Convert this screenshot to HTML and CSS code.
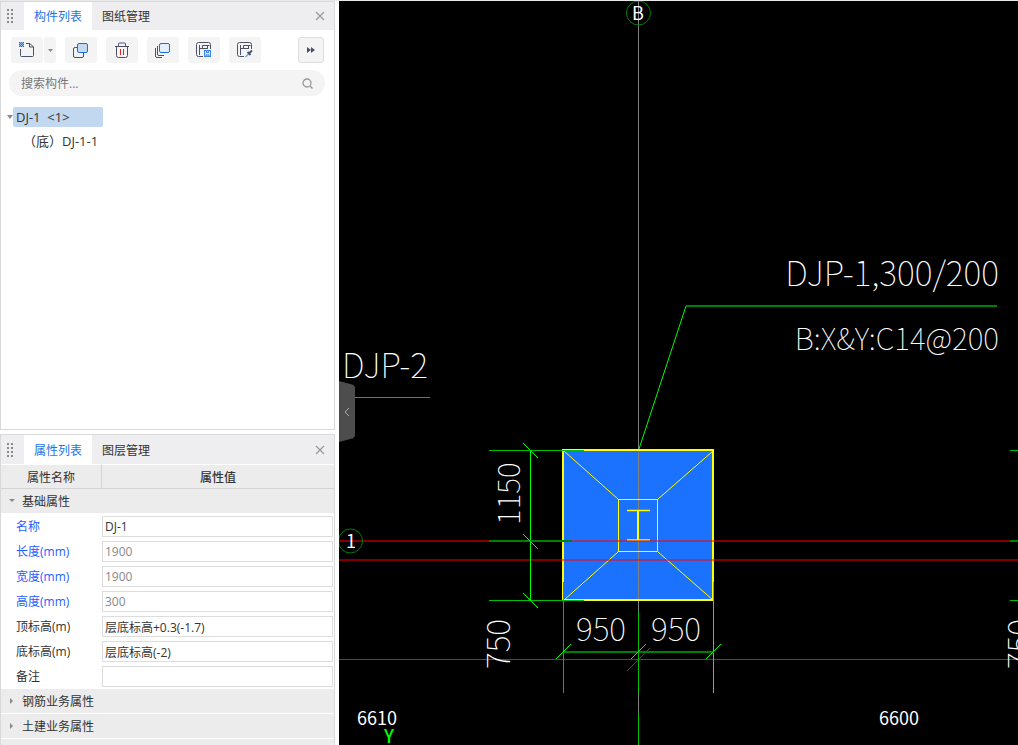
FILE: index.html
```html
<!DOCTYPE html>
<html lang="zh-CN">
<head>
  <meta charset="UTF-8" />
  <title>构件列表</title>
  <link rel="stylesheet" href="styles.css">
</head>
<body>

<div class="app">
  <aside class="sidebar">

    <section class="panel">
      <header class="panel-header">
        <svg class="grip" width="8" height="14" viewBox="0 0 8 14"><path d="M0 0h2v2H0zM0 4h2v2H0zM0 8h2v2H0zM0 12h2v2H0zM4 0h2v2H4zM4 4h2v2H4zM4 8h2v2H4zM4 12h2v2H4z" fill="#8a8a8a"/></svg>
        <button class="tab active">构件列表</button>
        <button class="tab">图纸管理</button>
        <button class="close" aria-label="关闭"><svg width="10" height="10" viewBox="0 0 10 10"><path d="M1 1l8 8M9 1L1 9" stroke="#999" stroke-width="1.2"/></svg></button>
      </header>

      <div class="toolbar">
        <div class="split">
          <button class="tool" aria-label="新建">
            <svg width="18" height="18" viewBox="0 0 18 18" fill="none">
              <path d="M2.500 8v6.500q0 1 1 1h11q1 0 1-1V6l-3.500-3.500H8M11.500 2.500V6H15.500" stroke="#4c5168"/>
              <path d="M1 1h1v1H1zM3 1h1v1H3zM5 1h1v1H5zM2 2h1v1H2zM4 2h1v1H4zM1 3h1v1H1zM3 3h1v1H3zM5 3h1v1H5zM2 4h1v1H2zM4 4h1v1H4zM1 5h1v1H1zM3 5h1v1H3zM5 5h1v1H5z" fill="#1a6fe0"/>
              <rect x="1" y="1" width="5" height="5" fill="#1a6fe0" opacity="0.4"/>
            </svg>
          </button>
          <button class="tool arrow" aria-label="更多新建"><svg width="5" height="3" viewBox="0 0 5 3"><path d="M0 0h5L2.500 3z" fill="#888"/></svg></button>
        </div>
        <button class="tool" aria-label="复制">
          <svg width="18" height="18" viewBox="0 0 18 18">
            <rect x="1.500" y="6.500" width="10" height="10" rx="1.500" fill="none" stroke="#4c5168"/>
            <rect x="5.500" y="2.500" width="10" height="9" rx="1.500" fill="#c5d9f1" stroke="#1a6fe0"/>
          </svg>
        </button>
        <button class="tool" aria-label="删除">
          <svg width="18" height="18" viewBox="0 0 18 18" fill="none">
            <path d="M2 5.500h14M3.500 5.500v9q0 2 2 2h7q2 0 2-2v-9M5.500 5V3q0-1 1-1h5q1 0 1 1v2" stroke="#4c5168"/>
            <path d="M7.500 8v6M10.500 8v6" stroke="#e02020"/>
          </svg>
        </button>
        <button class="tool" aria-label="层间复制">
          <svg width="18" height="18" viewBox="0 0 18 18" fill="none">
            <path d="M1.500 7v8q0 1.500 1.500 1.500h5M3.500 5v8q0 1.500 1.500 1.500h5" stroke="#4c5168"/>
            <rect x="5.500" y="2.500" width="10" height="9" rx="1.500" fill="#e6f0fd" stroke="#1a6fe0"/>
          </svg>
        </button>
        <button class="tool" aria-label="存档">
          <svg width="18" height="18" viewBox="0 0 18 18" fill="none">
            <path d="M8 15.500H3.500q-2 0-2-2v-10q0-2 2-2h10q2 0 2 2V8M4.500 4v10M4.500 7.500h8M7.500 7V4.500h7M12.500 5v3" stroke="#4c5168"/>
            <rect x="9.500" y="9.500" width="6" height="6" fill="#cfe2fa" stroke="#3b87e8"/>
            <path d="M11.500 10v1.500h2V10M11 15v-1h3v1" stroke="#3b87e8"/>
          </svg>
        </button>
        <button class="tool" aria-label="提取">
          <svg width="18" height="18" viewBox="0 0 18 18" fill="none">
            <path d="M8 15.500H3.500q-2 0-2-2v-10q0-2 2-2h10q2 0 2 2V8M4.500 4v10M4.500 7.500h8M7.500 7V4.500h7M12.500 5v3" stroke="#4c5168"/>
            <path d="M9.500 16l3-3" stroke="#6fa5e8" stroke-width="1.500"/>
            <path d="M11.500 11l3 3M13 12.500l3-3" stroke="#4c5168" stroke-width="1.800"/>
          </svg>
        </button>
        <button class="tool more" aria-label="更多"><svg width="8" height="6" viewBox="0 0 8 6"><path d="M0 0l4 3-4 3zM4 0l4 3-4 3z" fill="#4c5168"/></svg></button>
      </div>

      <div class="search">
        <input type="text" placeholder="搜索构件..." aria-label="搜索构件">
        <svg width="11" height="11" viewBox="0 0 11 11" fill="none"><circle cx="5" cy="5" r="4" stroke="#999" stroke-width="1.300"/><path d="M8 8l2.500 2.500" stroke="#999" stroke-width="1.500"/></svg>
      </div>

      <ul class="tree">
        <li>
          <svg width="6" height="4" viewBox="0 0 6 4"><path d="M0 0h6L3 4z" fill="#888"/></svg>
          <span class="node selected">DJ-1 &nbsp;&lt;1&gt;</span>
        </li>
        <li class="child"><span>（底）DJ-1-1</span></li>
      </ul>
    </section>

    <section class="panel">
      <header class="panel-header">
        <svg class="grip" width="8" height="14" viewBox="0 0 8 14"><path d="M0 0h2v2H0zM0 4h2v2H0zM0 8h2v2H0zM0 12h2v2H0zM4 0h2v2H4zM4 4h2v2H4zM4 8h2v2H4zM4 12h2v2H4z" fill="#8a8a8a"/></svg>
        <button class="tab active">属性列表</button>
        <button class="tab">图层管理</button>
        <button class="close" aria-label="关闭"><svg width="10" height="10" viewBox="0 0 10 10"><path d="M1 1l8 8M9 1L1 9" stroke="#999" stroke-width="1.2"/></svg></button>
      </header>

      <table class="props">
        <thead>
          <tr><th class="name-col">属性名称</th><th class="value-col">属性值</th></tr>
        </thead>
        <tbody>
          <tr class="group"><td colspan="2"><svg width="6" height="6" viewBox="0 0 6 6"><path d="M0 1h6L3 4z" fill="#888"/></svg>基础属性</td></tr>
          <tr class="key"><td><label for="p-name">名称</label></td><td><input id="p-name" type="text" value="DJ-1"></td></tr>
          <tr class="key"><td><label for="p-length">长度(mm)</label></td><td><input id="p-length" type="text" value="1900" readonly></td></tr>
          <tr class="key"><td><label for="p-width">宽度(mm)</label></td><td><input id="p-width" type="text" value="1900" readonly></td></tr>
          <tr class="key"><td><label for="p-height">高度(mm)</label></td><td><input id="p-height" type="text" value="300" readonly></td></tr>
          <tr><td><label for="p-top">顶标高(m)</label></td><td><input id="p-top" type="text" value="层底标高+0.3(-1.7)"></td></tr>
          <tr><td><label for="p-bottom">底标高(m)</label></td><td><input id="p-bottom" type="text" value="层底标高(-2)"></td></tr>
          <tr><td><label for="p-note">备注</label></td><td><input id="p-note" type="text" value=""></td></tr>
          <tr class="group"><td colspan="2"><svg width="6" height="6" viewBox="0 0 6 6"><path d="M1 0v6l3-3z" fill="#888"/></svg>钢筋业务属性</td></tr>
          <tr class="group"><td colspan="2"><svg width="6" height="6" viewBox="0 0 6 6"><path d="M1 0v6l3-3z" fill="#888"/></svg>土建业务属性</td></tr>
          <tr class="group"><td colspan="2"></td></tr>
        </tbody>
      </table>
    </section>

  </aside>

  <main class="canvas">
    <svg class="drawing" viewBox="0 0 679 744" preserveAspectRatio="xMinYMin slice">
      <!-- foundation -->
      <rect x="224" y="449" width="150" height="150" fill="#1a72ff"/>

      <!-- axes -->
      <path class="grey" d="M299.500 0V744"/>
      <path class="dark" d="M0 658.500H679"/>

      <rect class="yellow thick" x="224" y="449" width="150" height="150"/>
      <rect class="yellow" x="279.500" y="498.500" width="39" height="52"/>
      <path class="yellow" d="M225 450L279.500 498.500M374 450L318.500 498.500M225 599L279.500 550.500M374 599L318.500 550.500"/>
      <path class="yellow" d="M299 509V539" stroke-width="2"/>
      <path class="yellow" d="M288 509.500H311M288 539H311" stroke-width="1.500"/>
      <path class="red" d="M0 540H150M233 540H671M0 559H679"/>

      <!-- left dimension -->
      <path class="green" d="M150 449.500H245M150 599.500H245"/>
      <path class="bright" d="M191.500 449V600"/>
      <path class="dark wide" d="M150 540H233"/>
      <path class="bright" d="M184 442l15 15M184 533l15 15M184 592l15 15"/>

      <!-- bottom dimension -->
      <path class="green" d="M224.500 581V692M299.500 610V692M299.500 713V744"/>
      <path class="bright" d="M374.500 581V692"/>
      <path class="dark wide" d="M224 651H375"/>
      <path class="bright" d="M217 658l15-15M292 658l15-15M367 658l15-15"/>
      <path class="dark" d="M288 670l23-23"/>

      <!-- next foundation on the right -->
      <path class="green" d="M671 449.500H679M671 599.500H679"/>
      <path class="dark wide" d="M671 540H679"/>

      <!-- leaders -->
      <path class="bright" d="M300 448L347 305"/>
      <path class="dark wide" d="M347 305H658"/>
      <path class="green" d="M0 396.500H91"/>

      <circle class="dark" cx="299.500" cy="12" r="12"/>
      <circle class="dark" cx="11.500" cy="540" r="12"/>
      <text class="axis" x="299" y="19" text-anchor="middle">B</text>
      <text class="axis" x="12" y="547" text-anchor="middle">1</text>
      <text class="axis" x="18" y="724">6610</text>
      <text class="axis" x="540" y="724">6600</text>
      <text class="axis y-axis" x="50" y="742" text-anchor="middle">Y</text>

      <text class="cad large" x="660" y="285" text-anchor="end">DJP-1,300/200</text>
      <text class="cad small" x="660" y="349" text-anchor="end">B:X&amp;Y:C14@200</text>
      <text class="cad large" x="3" y="377">DJP-2</text>
      <text class="cad" x="262" y="640" text-anchor="middle">950</text>
      <text class="cad" x="337" y="640" text-anchor="middle">950</text>
      <text class="cad small" transform="translate(181 524) rotate(-90)">1150</text>
      <text class="cad" transform="translate(171 668) rotate(-90)">750</text>
      <text class="cad small" transform="translate(702 524) rotate(-90)">1150</text>
      <text class="cad" transform="translate(692 668) rotate(-90)">750</text>
    </svg>
    <button class="collapse" aria-label="收起"><svg width="6" height="8" viewBox="0 0 6 8" fill="none"><path d="M5 0L1 4l4 4" stroke="#aaa"/></svg></button>
  </main>
</div>

</body>
</html>
```
FILE: styles.css
```css
* {
  box-sizing: border-box;
}

body {
  margin: 0;
  font-family: 'Open Sans', 'Noto Sans CJK SC', sans-serif;
  font-size: 12px;
  line-height: 20px;
  color: #333;
  background-color: white;
}

button, input {
  font: inherit;
  color: inherit;
  border: none;
  padding: 0;
}

button {
  background: none;
  cursor: pointer;
}

svg {
  flex: none;
}

.app {
  display: flex;
  height: 100vh;
  border-top: 1px solid #e8e8e8;
  overflow: hidden;
}

.sidebar {
  display: grid;
  grid-template-rows: 429fr 311fr;
  gap: 4px;
  width: 335px;
  margin-right: 4px;
  flex: none;
}

.panel {
  min-height: 0;
  overflow: hidden;
  border: 1px solid #d9d9d9;
}

.panel:last-child {
  border-bottom: none;
}

.panel-header {
  display: flex;
  align-items: stretch;
  height: 28px;
  background-color: #eeeef0;
}

.panel:last-child .panel-header {
  height: 29px;
}

.grip {
  align-self: center;
  margin: 0 9px 0 6px;
}

.tab {
  width: 68px;
  padding-top: 2px;
}

.tab.active {
  color: #1a73e8;
  background-color: white;
}

.close {
  display: flex;
  align-items: center;
  margin-left: auto;
  padding: 0 9px;
}

/* toolbar */
.toolbar {
  display: flex;
  gap: 9px;
  padding: 7px 10px;
}

.split {
  display: flex;
  gap: 1px;
}

.tool {
  display: flex;
  align-items: center;
  justify-content: center;
  width: 32px;
  height: 26px;
  border-radius: 3px;
  background-color: #f4f4f4;
}

.tool.arrow {
  width: 12px;
}

.tool.more {
  width: 26px;
  margin-left: auto;
  border: 1px solid #ddd;
}

.search {
  display: flex;
  align-items: center;
  height: 26px;
  margin: 0 9px 0 8px;
  padding: 0 12px;
  border-radius: 13px;
  background-color: #f4f4f4;
}

.search input {
  flex: 1;
  min-width: 0;
  padding-top: 2px;
  background: none;
  outline: none;
}

.search input::placeholder {
  color: #777;
}

/* component tree */
.tree {
  list-style: none;
  margin: 9px 0;
  padding: 0 6px;
  font-size: 13px;
}

.tree li {
  display: flex;
  align-items: center;
  height: 24px;
}

.tree .child {
  padding-left: 16px;
}

.node {
  width: 90px;
  padding: 0 3px;
  border-radius: 2px;
}

.node.selected {
  background-color: #c2d8f0;
}

/* properties */
.props {
  width: 100%;
  table-layout: fixed;
  border-collapse: separate;
  border-spacing: 0;
}

.props th {
  height: 25px;
  padding: 2px 0 0;
  border-top: 1px solid white;
  border-bottom: 1px solid #d4d4d4;
  background-color: #ececec;
  font-weight: 500;
}

.props .name-col {
  width: 101px;
  border-right: 1px solid #d4d4d4;
  font-weight: 400;
}

.props td {
  height: 25px;
  padding: 0 0 0 15px;
}

.props td + td {
  padding: 0 1px 0 0;
}

.props .group td {
  padding: 2px 0 0 8px;
  background-color: #ececec;
  border-bottom: 1px solid white;
}

.group svg {
  margin-right: 7px;
  vertical-align: 2px;
}

.props .key td:first-child {
  color: #1f5eff;
}

.props input {
  display: block;
  width: 100%;
  height: 21px;
  padding: 0 2px;
  border: 1px solid #ddd;
}

.props input:read-only {
  color: #888;
}

/* drawing area */
.canvas {
  position: relative;
  flex: 1;
  min-width: 0;
  background-color: black;
  overflow: hidden;
}

.drawing {
  display: block;
  width: 100%;
  height: 100%;
  fill: none;
}

.grey { stroke: #808080; }
.red { stroke: rgba(255, 0, 0, 0.5); stroke-width: 2; }
.dark { stroke: #008000; }
.green { stroke: #00c000; }
.bright { stroke: #00ff00; }
.yellow { stroke: #ffff00; }
.wide, .thick { stroke-width: 2; }

.axis {
  font-family: 'Noto Sans CJK SC', sans-serif;
  font-size: 18px;
  fill: white;
}

.y-axis {
  font-weight: 500;
  fill: #00ff00;
}

.cad {
  font-family: 'Noto Sans CJK SC', sans-serif;
  font-size: 32px;
  font-weight: 100;
  fill: white;
}

.cad.large {
  font-size: 34px;
}

.cad.small {
  font-size: 30px;
}

.collapse {
  position: absolute;
  top: 380px;
  left: 0;
  display: flex;
  align-items: center;
  justify-content: center;
  width: 16px;
  height: 61px;
  background-color: #4d4d4d;
  clip-path: polygon(0 0, 88% 6%, 100% 10%, 100% 90%, 88% 94%, 0 100%);
}
```
